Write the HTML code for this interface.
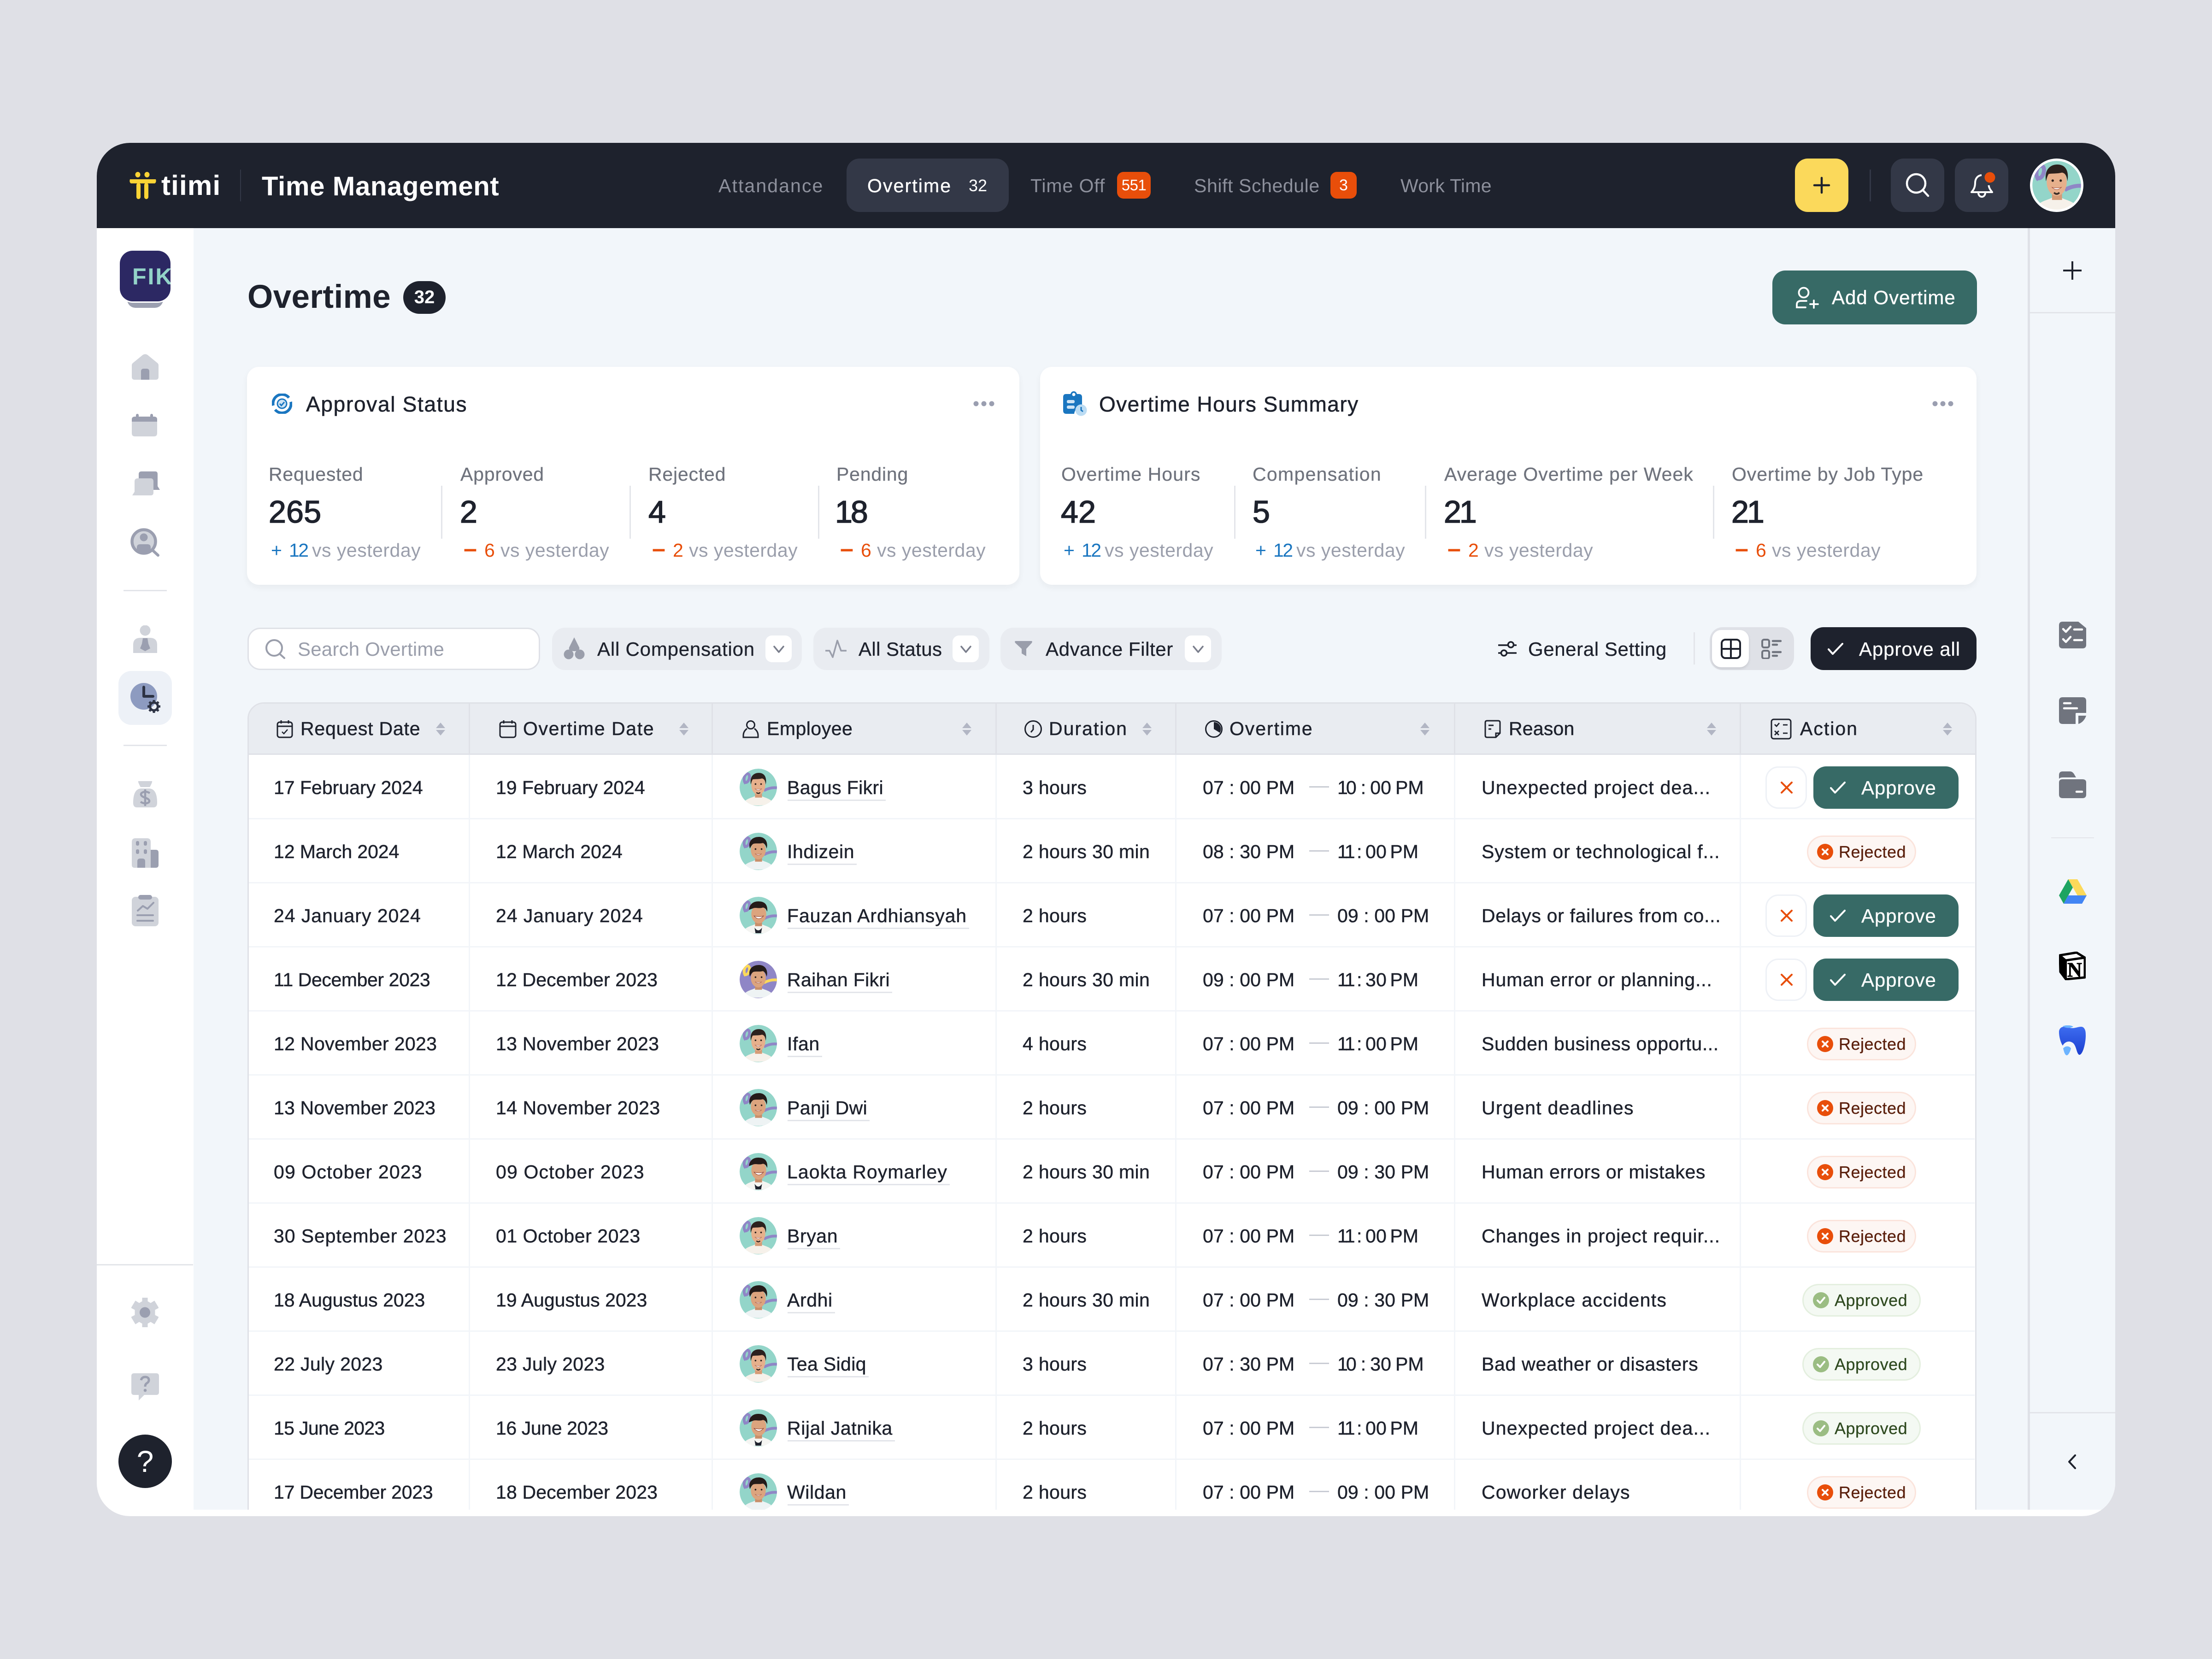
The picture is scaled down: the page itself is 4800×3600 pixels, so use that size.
<!DOCTYPE html>
<html lang="en"><head><meta charset="utf-8"><title>Time Management</title>
<style>
html,body{margin:0;padding:0;width:4800px;height:3600px;overflow:hidden;background:#dfe0e6}
*{box-sizing:border-box}
body{font-family:"Liberation Sans",sans-serif;color:#1e222d}
i{font-style:normal}
.a,.t,svg{position:absolute}
.t{white-space:nowrap;line-height:60px}
#f{position:absolute;left:0;top:0;width:4800px;height:3600px;background:#fff;clip-path:inset(310px 210px 310px 210px round 72px)}
.nav{font-size:41px;color:#8d909c;letter-spacing:.6px;top:373px}
.bd{background:#e84e0a;color:#fff;border-radius:14px;height:58px;top:373px;text-align:center;font-size:34px;line-height:58px}
.card{background:#fff;border-radius:26px;top:796px;height:473px;box-shadow:0 6px 14px rgba(30,34,45,.05)}
.ct{font-size:46px;top:847px;letter-spacing:1.7px;-webkit-text-stroke:.6px #1e222d}
.lb{font-size:41px;color:#6f737d;top:999px;letter-spacing:.8px;-webkit-text-stroke:.3px #6f737d}
.nm{font-size:68px;top:1081px;-webkit-text-stroke:1.6px #1e222d;line-height:60px;letter-spacing:.3px}
.dl{font-size:41px;color:#9a9eab;top:1164px;letter-spacing:.5px}
.dl b{font-weight:400;display:inline-block}
.dl b.mn{font-size:52px;font-weight:700;width:45px;line-height:40px}
.dl b.tw{letter-spacing:-2.5px}
.bl{color:#1a76c0}.or{color:#e84e0a}
.dv{background:#e3e5ea;width:3px;top:1054px;height:115px}
.tb{background:#e9ecf1;border-radius:28px;top:1362px;height:92px}
.fl{font-size:42px;top:1379px;letter-spacing:.4px;-webkit-text-stroke:.35px #1e222d}
.cv{background:#fff;border-radius:14px;top:1379px;width:57px;height:58px}
.th{font-size:41px;top:1551px;letter-spacing:.5px;-webkit-text-stroke:.5px #1e222d}
.v{top:1527px;height:1749px;width:3px;background:#f2f5f9}
.vh{top:1527px;height:108px;width:3px;background:#dfe1e7}
.r{position:absolute;left:0;width:4800px;height:139px}
.r::after{content:"";position:absolute;left:540px;width:3745px;top:137px;height:3px;background:#f2f5f9}
.r>i,.r>u{position:absolute;top:0;line-height:142px;font-size:41px;white-space:nowrap;letter-spacing:.35px;-webkit-text-stroke:.5px #1e222d;text-decoration:none}
.c1{left:594px}.c2{left:1076px}.d{left:2219px}.s{left:2610px;letter-spacing:.1px!important}.e{left:2902px;letter-spacing:.1px!important}.e s{text-decoration:none;letter-spacing:-4px}.e.t1{word-spacing:-2.5px}.e.t2{word-spacing:-4px}.w{left:3215px}
.r>u{left:1706px;padding-left:2px;letter-spacing:.6px}
.r>u::after{content:"";position:absolute;left:3px;right:-5px;top:97px;height:3px;background:#e3e5ea}
.r>b{position:absolute;left:2841px;top:68px;width:43px;height:3px;background:#c9ccd4}
.r>svg.av{left:1605px;top:30px;width:81px;height:81px;border-radius:50%}
.x{position:absolute;left:3831px;top:25px;width:90px;height:92px;border:3px solid #eef1f6;border-radius:28px;background:#fff}
.ab{position:absolute;left:3935px;top:25px;width:315px;height:92px;background:#376a66;border-radius:28px;color:#fff;font-size:42px;line-height:94px;padding-left:104px;letter-spacing:.9px;-webkit-text-stroke:.3px #fff}
.rj,.ap{position:absolute;top:36px;height:71px;border-radius:36px;font-size:36px;line-height:66px;letter-spacing:.5px;white-space:nowrap}
.rj{left:3921px;width:237px;background:#fdf6f3;border:3px solid #fbe4dc;color:#5a1f0c;padding-left:66px;-webkit-text-stroke:.3px #5a1f0c}
.ap{left:3911px;width:257px;background:#f4f9f3;border:3px solid #e4efdf;color:#2f4a20;padding-left:67px;-webkit-text-stroke:.3px #2f4a20}
.rj svg,.ap svg{left:19px;top:15px;width:35px;height:35px}
.ap svg{left:20px}
</style></head><body>
<svg width="0" height="0" style="position:absolute;left:0;top:0">
<defs>
<symbol id="bgt" viewBox="0 0 80 80"><circle cx="40" cy="40" r="40" fill="#93d5c9"/><path d="M13 32C6 24 11 9 18 11C25 14 19 33 11 29" fill="none" stroke="#8f86c6" stroke-width="6"/><path d="M52 47C61 42 71 40 80 41" fill="none" stroke="#8f86c6" stroke-width="6"/></symbol>
<symbol id="bgp" viewBox="0 0 80 80"><circle cx="40" cy="40" r="40" fill="#8f86c6"/><path d="M13 32C6 24 11 9 18 11C25 14 19 33 11 29" fill="none" stroke="#fbd95b" stroke-width="6"/><path d="M52 47C61 42 71 40 80 41" fill="none" stroke="#fbd95b" stroke-width="6"/></symbol>
<symbol id="p1" viewBox="0 0 80 80"><path d="M10 70C20 62 28 62 34 58L46 58C52 62 60 62 70 70C60 82 20 82 10 70Z" fill="#f6f1ea"/><rect x="33" y="48" width="15" height="14" fill="#d59b76"/><ellipse cx="40" cy="35" rx="15" ry="21" fill="#e6b08c"/><path d="M24 34C21 17 30 9 41 9C52 9 59 17 56 34C55 26 53 22 48 21C40 23 33 22 28 23C26 26 25 30 24 34Z" fill="#2b211e"/><circle cx="34" cy="33" r="1.8" fill="#2b211e"/><circle cx="46" cy="33" r="1.8" fill="#2b211e"/><path d="M33 43Q40 50 47 43Q40 45 33 43Z" fill="#fff" stroke="#a5523e" stroke-width=".7"/><path d="M36 51Q40 55 44 51" stroke="#3a2c26" stroke-width="2.5" fill="none"/></symbol>
<symbol id="p2" viewBox="0 0 80 80"><path d="M10 70C20 62 28 62 34 58L46 58C52 62 60 62 70 70C60 82 20 82 10 70Z" fill="#eef3f4"/><rect x="33" y="48" width="15" height="14" fill="#c98f6a"/><ellipse cx="40" cy="37" rx="16" ry="20" fill="#dca47e"/><path d="M22 34C17 17 29 9 40 9C52 8 62 17 58 34C56 27 54 24 50 22C42 24 34 22 29 24C26 26 24 30 22 34Z" fill="#241b19"/><circle cx="34" cy="35" r="1.8" fill="#2b211e"/><circle cx="47" cy="35" r="1.8" fill="#2b211e"/><path d="M33 45Q40 51 47 45Q40 47 33 45Z" fill="#fff" stroke="#a5523e" stroke-width=".7"/></symbol>
<symbol id="p3" viewBox="0 0 80 80"><path d="M10 70C20 62 28 62 34 58L46 58C52 62 60 62 70 70C60 82 20 82 10 70Z" fill="#f5f5f2"/><path d="M32 66Q40 78 48 66L46 78H34Z" fill="#1e222d"/><rect x="33" y="48" width="15" height="15" fill="#c98f6a"/><ellipse cx="41" cy="37" rx="16" ry="20" fill="#dca47e"/><path d="M20 28C21 14 32 9 42 10C54 10 61 18 59 32C57 27 55 24 50 23C42 26 34 22 28 25C25 26 23 27 20 28Z" fill="#241b19"/><path d="M31 41Q41 53 51 41Q41 44 31 41Z" fill="#fff" stroke="#8a3b2c" stroke-width="1"/></symbol>
<symbol id="sr" viewBox="0 0 20 28"><path d="M10 0L20 12H0Z" fill="#b2b6c4"/><path d="M0 16H20L10 28Z" fill="#b2b6c4"/></symbol>
<symbol id="rx" viewBox="0 0 35 35"><circle cx="17.5" cy="17.5" r="17.5" fill="#e84e0a"/><path d="M12 12L23 23M23 12L12 23" stroke="#fff" stroke-width="4" stroke-linecap="round"/></symbol>
<symbol id="ok" viewBox="0 0 35 35"><circle cx="17.5" cy="17.5" r="17.5" fill="#9bbd83"/><path d="M10 18L15.5 23.5L25 12" stroke="#fff" stroke-width="4" fill="none" stroke-linecap="round" stroke-linejoin="round"/></symbol>
<symbol id="ck" viewBox="0 0 34 26"><path d="M2 14L11 24L32 2" stroke="#fff" stroke-width="4" fill="none" stroke-linecap="round" stroke-linejoin="round"/></symbol>
<symbol id="xx" viewBox="0 0 26 26"><path d="M2 2L24 24M24 2L2 24" stroke="#e84e0a" stroke-width="4" stroke-linecap="round"/></symbol>
<symbol id="dt" viewBox="0 0 46 12"><circle cx="6" cy="6" r="5.5" fill="#9a9eb0"/><circle cx="23" cy="6" r="5.5" fill="#9a9eb0"/><circle cx="40" cy="6" r="5.5" fill="#9a9eb0"/></symbol>
<symbol id="chv" viewBox="0 0 24 16"><path d="M2 2L12 14L22 2" stroke="#7a7e8c" stroke-width="3.5" fill="none" stroke-linecap="round" stroke-linejoin="round"/></symbol>
</defs></svg>

<div id="f">
<!-- main backgrounds -->
<div class="a" style="left:420px;top:495px;width:3980px;height:2781px;background:#f2f6fa"></div>
<div class="a" style="left:4400px;top:495px;width:5px;height:2781px;background:#dfe1e7"></div>
<div class="a" style="left:4405px;top:495px;width:185px;height:2781px;background:#f2f6fa"></div>

<!-- header -->
<div class="a" style="left:210px;top:310px;width:4380px;height:185px;background:#1e222d"></div>
<svg style="left:280px;top:373px" width="60" height="59" viewBox="0 0 60 59"><ellipse cx="19" cy="6" rx="5.5" ry="6" fill="#fbd335"/><ellipse cx="39" cy="6" rx="5.5" ry="6" fill="#fbd335"/><path d="M2 16H58Q60 22 56 25H4Q0 22 2 16Z" fill="#fbd335"/><rect x="16" y="24" width="9" height="35" rx="4.5" fill="#fbd335"/><rect x="33" y="24" width="9" height="35" rx="4.5" fill="#fbd335"/></svg>
<div class="t" style="left:350px;top:373px;font-size:60px;font-weight:700;color:#fff;letter-spacing:1.200px">tiimi</div>
<div class="a" style="left:521px;top:368px;width:2px;height:69px;background:#333847"></div>
<div class="t" style="left:568px;top:375px;font-size:58px;font-weight:700;color:#fff;letter-spacing:.7px">Time Management</div>

<div class="t nav" style="left:1559px;letter-spacing:2.1px">Attandance</div>
<div class="a" style="left:1837px;top:344px;width:352px;height:116px;border-radius:28px;background:#333847"></div>
<div class="t nav" style="left:1882px;color:#fff;-webkit-text-stroke:.4px #fff;letter-spacing:2.1px">Overtime</div>
<div class="t nav" style="left:2102px;color:#fff;font-size:36px;letter-spacing:0">32</div>
<div class="t nav" style="left:2236px;letter-spacing:.9px">Time Off</div>
<div class="a bd" style="left:2424px;width:73px;font-size:33px;letter-spacing:-.5px">551</div>
<div class="t nav" style="left:2591px">Shift Schedule</div>
<div class="a bd" style="left:2887px;width:57px">3</div>
<div class="t nav" style="left:3039px;letter-spacing:.3px">Work Time</div>

<div class="a" style="left:3895px;top:344px;width:116px;height:116px;border-radius:28px;background:#fbd95b"></div>
<svg style="left:3933px;top:382px" width="40" height="40" viewBox="0 0 40 40"><path d="M20 4V36M4 20H36" stroke="#1e222d" stroke-width="4.5" stroke-linecap="round"/></svg>
<div class="a" style="left:4057px;top:368px;width:3px;height:69px;background:#333847"></div>
<div class="a" style="left:4103px;top:344px;width:116px;height:116px;border-radius:28px;background:#333847"></div>
<svg style="left:4130px;top:370px" width="60" height="60" viewBox="0 0 60 60"><circle cx="28" cy="28" r="20" fill="none" stroke="#fff" stroke-width="4.5"/><path d="M43 43L54 55" stroke="#fff" stroke-width="4.5" stroke-linecap="round"/></svg>
<div class="a" style="left:4242px;top:344px;width:116px;height:116px;border-radius:28px;background:#333847"></div>
<svg style="left:4270px;top:370px" width="64" height="60" viewBox="0 0 64 60"><path d="M30 10C21 11 16 18 16 27C16 36 13 42 8 47H53C49 42 46 38 45.5 32" fill="none" stroke="#fff" stroke-width="4" stroke-linejoin="round"/><path d="M23 48C23 60 38 60 38 48" fill="none" stroke="#fff" stroke-width="4"/><circle cx="48" cy="15" r="11.5" fill="#e84e0a"/></svg>
<svg style="left:4405px;top:344px;border-radius:50%" width="116" height="116" viewBox="0 0 80 80"><use href="#bgt" width="80" height="80"/><use href="#p1" width="80" height="80"/><circle cx="40" cy="40" r="38.2" fill="none" stroke="#fff" stroke-width="3.6"/></svg>

<!-- sidebar -->
<div class="a" style="left:276px;top:650px;width:78px;height:18px;background:#9b9fb0;border-radius:0 0 20px 20px"></div>
<div class="a" style="left:260px;top:544px;width:110px;height:110px;background:#2c2863;border-radius:28px;overflow:hidden;box-shadow:0 3px 0 #fff"><div class="t" style="left:27px;top:26px;font-size:50px;font-weight:700;color:#93d3c8;letter-spacing:3px">FIK</div></div>
<svg style="left:286px;top:768px" width="58" height="56" viewBox="0 0 58 56"><path d="M24 2Q29 -1 34 2L56 20Q58 22 58 25V50Q58 56 52 56H6Q0 56 0 50V25Q0 22 2 20Z" fill="#d0d3da"/><path d="M20 56V38Q20 32 26 32H32Q38 32 38 38V56Z" fill="#9b9fb0"/></svg>
<svg style="left:286px;top:898px" width="56" height="50" viewBox="0 0 56 50"><path d="M0 17H55V42Q55 49 48 49H7Q0 49 0 42Z" fill="#d0d3da"/><path d="M0 17V12Q0 6 7 6H48Q55 6 55 12V17Z" fill="#9b9fb0"/><rect x="9" y="0" width="6" height="10" rx="3" fill="#9b9fb0"/><rect x="40" y="0" width="6" height="10" rx="3" fill="#9b9fb0"/></svg>
<svg style="left:287px;top:1023px" width="60" height="56" viewBox="0 0 60 56"><path d="M14 6Q14 0 20 0H50Q55 0 55 6V32L60 40H14Z" fill="#9b9fb0"/><path d="M5 22Q5 15 12 15H40Q46 15 46 22V46Q46 52 40 52H0L5 44Z" fill="#d0d3da"/></svg>
<svg style="left:283px;top:1146px" width="64" height="62" viewBox="0 0 64 62"><circle cx="29" cy="29" r="25.5" fill="#d0d3da" stroke="#9b9fb0" stroke-width="6.5"/><circle cx="29" cy="20" r="8.5" fill="#9b9fb0"/><path d="M14 47V42Q14 35 21 35H37Q44 35 44 42V47Q29 58 14 47Z" fill="#9b9fb0"/><path d="M47 47L60 59" stroke="#9b9fb0" stroke-width="6" stroke-linecap="round"/></svg>
<div class="a" style="left:268px;top:1280px;width:94px;height:3px;background:#e3e5ea"></div>
<svg style="left:289px;top:1357px" width="52" height="60" viewBox="0 0 52 60"><circle cx="26" cy="11" r="11.5" fill="#d0d3da"/><path d="M0 60V42Q0 27 16 27H36Q52 27 52 42V60Z" fill="#d0d3da"/><path d="M21 28H31L33 40L37 50L26 56L15 50L19 40Z" fill="#9b9fb0"/></svg>
<div class="a" style="left:257px;top:1456px;width:116px;height:117px;border-radius:28px;background:#edf1f7"></div>
<svg style="left:283px;top:1482px" width="66" height="66" viewBox="0 0 66 66"><circle cx="29" cy="29" r="29" fill="#8d9bc0"/><path d="M29 9V29H49" fill="none" stroke="#2d3344" stroke-width="6" stroke-linecap="round" stroke-linejoin="round"/><circle cx="51" cy="51" r="8.5" fill="none" stroke="#2d3344" stroke-width="5"/><path d="M51 37V42M51 60V65M37 51H42M60 51H65M41 41L44 44M58 58L61 61M61 41L58 44M44 58L41 61" stroke="#2d3344" stroke-width="5"/></svg>
<div class="a" style="left:268px;top:1616px;width:94px;height:3px;background:#e3e5ea"></div>
<svg style="left:289px;top:1694px" width="52" height="59" viewBox="0 0 52 59"><path d="M11 1H41Q42 3 36 14H16Q10 3 11 1Z" fill="#d0d3da"/><path d="M0 48Q0 18 17 17H35Q52 18 52 48Q52 58 44 58H8Q0 58 0 48Z" fill="#d0d3da"/><path d="M36 27Q26 21 18 27Q14 33 26 37Q38 41 34 47Q26 52 16 46M26 19V55" fill="none" stroke="#9b9fb0" stroke-width="4.5"/></svg>
<svg style="left:286px;top:1819px" width="58" height="64" viewBox="0 0 58 64"><path d="M0 8Q0 0 8 0H33Q41 0 41 8V64H6Q0 64 0 58Z" fill="#d0d3da"/><path d="M41 25H52Q58 25 58 31V58Q58 64 52 64H41Z" fill="#9b9fb0"/><rect x="9" y="6" width="7" height="10" rx="3" fill="#9b9fb0"/><rect x="26" y="6" width="7" height="10" rx="3" fill="#9b9fb0"/><rect x="9" y="24" width="7" height="10" rx="3" fill="#9b9fb0"/><rect x="26" y="24" width="7" height="10" rx="3" fill="#9b9fb0"/><path d="M12 64V50Q12 44 18 44H23Q29 44 29 50V64Z" fill="#9b9fb0"/></svg>
<svg style="left:286px;top:1942px" width="58" height="68" viewBox="0 0 58 68"><rect x="0" y="4" width="58" height="64" rx="8" fill="#d0d3da"/><rect x="14" y="0" width="30" height="10" rx="5" fill="#9b9fb0"/><path d="M13 34L24 24L34 30L47 17" fill="none" stroke="#9b9fb0" stroke-width="4" stroke-linecap="round" stroke-linejoin="round"/><path d="M12 44H46M12 56H46" stroke="#9b9fb0" stroke-width="4" stroke-linecap="round"/></svg>
<div class="a" style="left:210px;top:2743px;width:209px;height:3px;background:#e3e5ea"></div>
<svg style="left:285px;top:2816px" width="59" height="64" viewBox="0 0 59 64"><path d="M24 0H35V8L42 12L50 7L59 22L51 26V38L59 42L50 57L42 52L35 56V64H24V56L17 52L9 57L0 42L8 38V26L0 22L9 7L17 12L24 8Z" fill="#d0d3da" stroke="#d0d3da" stroke-width="1" stroke-linejoin="round"/><circle cx="29.500" cy="32" r="11.500" fill="#9b9fb0"/></svg>
<svg style="left:285px;top:2980px" width="60" height="60" viewBox="0 0 60 60"><path d="M6 0H54Q60 0 60 6V41Q60 47 54 47H28L16 59V47H6Q0 47 0 41V6Q0 0 6 0Z" fill="#d0d3da"/><path d="M21 15Q23 8 30 8Q38 8 38 15Q38 19 33 22Q30 24 30 29" fill="none" stroke="#9b9fb0" stroke-width="5"/><circle cx="30" cy="37" r="3.300" fill="#9b9fb0"/></svg>
<div class="a" style="left:257px;top:3113px;width:116px;height:116px;border-radius:50%;background:#1e222d;color:#fff;text-align:center;font-size:66px;line-height:116px">?</div>

<!-- right panel -->
<svg style="left:4477px;top:567px" width="40" height="40" viewBox="0 0 40 40"><path d="M20 1V39M1 20H39" stroke="#1e222d" stroke-width="4" stroke-linecap="round"/></svg>
<div class="a" style="left:4405px;top:677px;width:185px;height:3px;background:#e3e5ea"></div>
<svg style="left:4468px;top:1349px" width="59" height="58" viewBox="0 0 59 58"><path d="M8 0H42L59 14V50Q59 58 51 58H8Q0 58 0 50V8Q0 0 8 0Z" fill="#70747e"/><path d="M9 16L15 22L25 11M9 38L15 44L25 33M33 17H50M33 40H50" fill="none" stroke="#fff" stroke-width="4.500" stroke-linecap="round" stroke-linejoin="round"/></svg>
<svg style="left:4468px;top:1513px" width="59" height="58" viewBox="0 0 59 58"><path d="M8 0H51Q59 0 59 8V34H38Q36 34 36 36V58H8Q0 58 0 50V8Q0 0 8 0Z" fill="#70747e"/><path d="M42 40H59Q54 54 42 58Z" fill="#70747e"/><path d="M11 13H25M11 24H39" stroke="#fff" stroke-width="4.500" stroke-linecap="round"/></svg>
<svg style="left:4468px;top:1674px" width="59" height="58" viewBox="0 0 59 58"><path d="M0 16V8Q0 0 8 0H24Q30 0 34 8L37 13H8Q2 13 0 16Z" fill="#70747e"/><path d="M0 24Q0 17 8 17H51Q59 17 59 24V50Q59 58 51 58H8Q0 58 0 50Z" fill="#70747e"/><path d="M38 44H50" stroke="#fff" stroke-width="4.500" stroke-linecap="round"/></svg>
<div class="a" style="left:4451px;top:1817px;width:93px;height:2px;background:#e3e5ea"></div>
<svg style="left:4468px;top:1908px" width="60" height="53" viewBox="0 0 60 53"><path d="M20 0H40L60 35H40Z" fill="#fcd95a"/><path d="M20 0L0 35L10 53L30 18Z" fill="#1da462"/><path d="M10 53H50L60 35H20Z" fill="#4285f4"/></svg>
<svg style="left:4468px;top:2065px" width="58" height="62" viewBox="0 0 58 62"><path d="M2 8L38 2L56 13V56L15 60L3 44Z" fill="#fff" stroke="#000" stroke-width="5" stroke-linejoin="round"/><path d="M2 8L15 19V60L3 44Z" fill="#000" stroke="#000" stroke-width="4" stroke-linejoin="round"/><path d="M15 19L56 13" stroke="#000" stroke-width="5"/><text x="18" y="54" font-family="Liberation Serif" font-weight="700" font-size="44" fill="#000" stroke="#000" stroke-width="1">N</text></svg>
<svg style="left:4468px;top:2225px" width="58" height="66" viewBox="0 0 58 66"><defs><linearGradient id="tg" x1="0" y1="0" x2="0" y2="1"><stop offset="0" stop-color="#3d6cf0"/><stop offset="1" stop-color="#1c3fd0"/></linearGradient></defs><path d="M6 4C14 1 20 6 29 6C38 6 46 1 52 4C58 8 58 16 58 22C58 38 52 64 44 64C38 62 38 44 30 38C22 32 12 36 8 44C3 36 0 24 0 14C0 10 2 6 6 4Z" fill="url(#tg)"/><path d="M8 2C14 -1 26 -1 31 3C24 7 14 6 8 2Z" fill="#6cb4ff"/><path d="M9 50C14 44 22 44 26 50C24 58 20 65 17 65C13 65 11 58 9 50Z" fill="#6cb4ff"/></svg>
<div class="a" style="left:4405px;top:3064px;width:185px;height:3px;background:#e3e5ea"></div>
<svg style="left:4486px;top:3156px" width="20" height="32" viewBox="0 0 20 32"><path d="M17 2L4 16L17 30" fill="none" stroke="#1e222d" stroke-width="4" stroke-linecap="round" stroke-linejoin="round"/></svg>

<!-- title -->
<div class="t" style="left:537px;top:615px;font-size:71px;font-weight:700;line-height:60px;letter-spacing:.4px">Overtime</div>
<div class="a" style="left:875px;top:610px;width:92px;height:71px;border-radius:36px;background:#1e222d;color:#fff;text-align:center;font-size:40px;font-weight:700;line-height:71px">32</div>
<div class="a" style="left:3846px;top:587px;width:444px;height:117px;border-radius:28px;background:#376a66"></div>
<svg style="left:3896px;top:622px" width="52" height="48" viewBox="0 0 52 48"><circle cx="18" cy="13" r="10.500" fill="none" stroke="#fff" stroke-width="3.800"/><path d="M24 31H12Q3 31 3 39V45H22" fill="none" stroke="#fff" stroke-width="3.800" stroke-linecap="round"/><path d="M40 30V46M32 38H49" stroke="#fff" stroke-width="3.800" stroke-linecap="round"/></svg>
<div class="t" style="left:3975px;top:616px;font-size:42px;color:#fff;letter-spacing:1px;-webkit-text-stroke:.4px #fff">Add Overtime</div>

<!-- card 1 -->
<div class="a card" style="left:536px;width:1676px"></div>
<svg style="left:590px;top:854px" width="44" height="44" viewBox="0 0 44 44"><path d="M3 26A19.500 19.500 0 0 1 37 9" fill="none" stroke="#1a76c0" stroke-width="6"/><path d="M41 18A19.500 19.500 0 0 1 7 35" fill="none" stroke="#1a76c0" stroke-width="6"/><circle cx="22" cy="22" r="10" fill="#cfe4f5" stroke="#1a76c0" stroke-width="3"/><path d="M17 22L20.500 26L27 18.500" fill="none" stroke="#1a76c0" stroke-width="3"/></svg>
<div class="t ct" style="left:664px">Approval Status</div>
<svg style="left:2112px;top:870px" width="46" height="12"><use href="#dt" width="46" height="12"/></svg>
<div class="t lb" style="left:583px">Requested</div>
<div class="t lb" style="left:999px">Approved</div>
<div class="t lb" style="left:1407px">Rejected</div>
<div class="t lb" style="left:1815px">Pending</div>
<div class="t nm" style="left:583px">265</div>
<div class="t nm" style="left:998px">2</div>
<div class="t nm" style="left:1407px">4</div>
<div class="t nm" style="left:1812px;letter-spacing:-4px">18</div>
<div class="a dv" style="left:957px"></div><div class="a dv" style="left:1366px"></div><div class="a dv" style="left:1775px"></div>
<div class="t dl" style="left:588px"><b class="bl" style="width:39px">+</b><b class="bl tw" style="width:50px">12</b>vs yesterday</div>
<div class="t dl" style="left:1006px"><b class="or mn">–</b><b class="or" style="width:35px">6</b>vs yesterday</div>
<div class="t dl" style="left:1415px"><b class="or mn">–</b><b class="or" style="width:35px">2</b>vs yesterday</div>
<div class="t dl" style="left:1823px"><b class="or mn">–</b><b class="or" style="width:35px">6</b>vs yesterday</div>

<!-- card 2 -->
<div class="a card" style="left:2257px;width:2032px"></div>
<svg style="left:2307px;top:849px" width="52" height="54" viewBox="0 0 52 54"><path d="M6 6H16Q18 0 23 0Q28 0 30 6H34Q41 6 41 13V34A16 16 0 0 0 24 49H7Q0 49 0 42V13Q0 6 6 6Z" fill="#1a76c0"/><circle cx="23" cy="7" r="3.500" fill="#fff"/><rect x="8" y="19" width="17" height="7" rx="3" fill="#cfe4f5"/><rect x="8" y="31" width="17" height="7" rx="3" fill="#cfe4f5"/><circle cx="39" cy="41" r="12.500" fill="#bcdcf3"/><path d="M39 34V41L43 44" fill="none" stroke="#1a76c0" stroke-width="3"/></svg>
<div class="t ct" style="left:2385px;letter-spacing:1.45px">Overtime Hours Summary</div>
<svg style="left:4193px;top:870px" width="46" height="12"><use href="#dt" width="46" height="12"/></svg>
<div class="t lb" style="left:2303px;letter-spacing:1.1px">Overtime Hours</div>
<div class="t lb" style="left:2718px;letter-spacing:1.3px">Compensation</div>
<div class="t lb" style="left:3134px;letter-spacing:1px">Average Overtime per Week</div>
<div class="t lb" style="left:3758px;letter-spacing:.9px">Overtime by Job Type</div>
<div class="t nm" style="left:2302px">42</div>
<div class="t nm" style="left:2718px">5</div>
<div class="t nm" style="left:3133px;letter-spacing:-4px">21</div>
<div class="t nm" style="left:3757px;letter-spacing:-4px">21</div>
<div class="a dv" style="left:2678px"></div><div class="a dv" style="left:3092px"></div><div class="a dv" style="left:3717px"></div>
<div class="t dl" style="left:2308px"><b class="bl" style="width:39px">+</b><b class="bl tw" style="width:50px">12</b>vs yesterday</div>
<div class="t dl" style="left:2724px"><b class="bl" style="width:39px">+</b><b class="bl tw" style="width:50px">12</b>vs yesterday</div>
<div class="t dl" style="left:3141px"><b class="or mn">–</b><b class="or" style="width:35px">2</b>vs yesterday</div>
<div class="t dl" style="left:3765px"><b class="or mn">–</b><b class="or" style="width:35px">6</b>vs yesterday</div>

<!-- toolbar -->
<div class="a" style="left:537px;top:1362px;width:635px;height:92px;background:#fff;border:3px solid #dfe1e7;border-radius:28px"></div>
<svg style="left:574px;top:1386px" width="48" height="44" viewBox="0 0 48 44"><circle cx="21" cy="20" r="17" fill="none" stroke="#9a9eab" stroke-width="4"/><path d="M33 33L43 42" stroke="#9a9eab" stroke-width="4" stroke-linecap="round"/></svg>
<div class="t fl" style="left:646px;color:#9a9eab;-webkit-text-stroke:0;letter-spacing:.2px">Search Overtime</div>
<div class="a tb" style="left:1198px;width:542px"></div>
<svg style="left:1223px;top:1383px" width="46" height="48" viewBox="0 0 46 48"><path d="M23 0L34 22Q36 30 23 30Q10 30 12 22Z" fill="#9a9eab"/><circle cx="11" cy="37" r="10.500" fill="#9a9eab"/><circle cx="35" cy="37" r="10.500" fill="#9a9eab"/></svg>
<div class="t fl" style="left:1296px;letter-spacing:.8px">All Compensation</div>
<div class="a cv" style="left:1661px"></div>
<svg style="left:1678px;top:1401px" width="24" height="16"><use href="#chv" width="24" height="16"/></svg>
<div class="a tb" style="left:1765px;width:382px"></div>
<svg style="left:1791px;top:1388px" width="46" height="40" viewBox="0 0 46 40"><path d="M1 24H9L16 38L26 2L34 24H45" fill="none" stroke="#9a9eab" stroke-width="3.500" stroke-linejoin="round" stroke-linecap="round"/></svg>
<div class="t fl" style="left:1863px">All Status</div>
<div class="a cv" style="left:2067px"></div>
<svg style="left:2084px;top:1401px" width="24" height="16"><use href="#chv" width="24" height="16"/></svg>
<div class="a tb" style="left:2171px;width:480px"></div>
<svg style="left:2201px;top:1388px" width="40" height="40" viewBox="0 0 40 40"><path d="M3 3H37Q40 3 38 7L26 20V36L16 30V20L2 7Q0 3 3 3Z" fill="#9a9eab"/></svg>
<div class="t fl" style="left:2269px;letter-spacing:.6px">Advance Filter</div>
<div class="a cv" style="left:2571px"></div>
<svg style="left:2588px;top:1401px" width="24" height="16"><use href="#chv" width="24" height="16"/></svg>
<svg style="left:3251px;top:1390px" width="40" height="36" viewBox="0 0 40 36"><path d="M1 10H21M34 10H39M1 27H6M19 27H39" stroke="#1e222d" stroke-width="3.500" stroke-linecap="round"/><circle cx="27.500" cy="9" r="6" fill="none" stroke="#1e222d" stroke-width="3.500"/><circle cx="12.500" cy="27" r="6" fill="none" stroke="#1e222d" stroke-width="3.500"/></svg>
<div class="t fl" style="left:3316px;letter-spacing:.6px">General Setting</div>
<div class="a" style="left:3675px;top:1372px;width:3px;height:70px;background:#e3e5ea"></div>
<div class="a" style="left:3710px;top:1361px;width:183px;height:93px;border-radius:28px;background:#dfe1e7"></div>
<div class="a" style="left:3715px;top:1367px;width:80px;height:81px;border-radius:20px;background:#fff;box-shadow:0 3px 6px rgba(30,34,45,.12)"></div>
<svg style="left:3734px;top:1386px" width="44" height="44" viewBox="0 0 44 44"><rect x="2" y="2" width="40" height="40" rx="8" fill="none" stroke="#1e222d" stroke-width="4"/><path d="M22 2V42M2 22H42" stroke="#1e222d" stroke-width="4"/></svg>
<svg style="left:3822px;top:1386px" width="44" height="44" viewBox="0 0 44 44"><rect x="2" y="2" width="15" height="17" rx="4" fill="none" stroke="#70747e" stroke-width="4"/><rect x="2" y="26" width="15" height="17" rx="4" fill="none" stroke="#70747e" stroke-width="4"/><path d="M25 5H42M25 13H34M25 29H42M25 37H34" stroke="#70747e" stroke-width="4.500" stroke-linecap="round"/></svg>
<div class="a" style="left:3929px;top:1361px;width:360px;height:93px;border-radius:28px;background:#1e222d"></div>
<svg style="left:3966px;top:1395px" width="34" height="26"><use href="#ck" width="34" height="26"/></svg>
<div class="t fl" style="left:4034px;color:#fff;-webkit-text-stroke:.3px #fff;letter-spacing:.9px">Approve all</div>

<!-- table -->
<div class="a" style="left:0;top:0;width:4800px;height:3276px;overflow:hidden">
<div class="a" style="left:537px;top:1524px;width:3752px;height:1800px;background:#fff;border:3px solid #dfe1e7;border-radius:36px 36px 0 0"></div>
<div class="a" style="left:540px;top:1527px;width:3746px;height:108px;background:#e9ecf1;border-radius:33px 33px 0 0"></div>
<div class="a" style="left:537px;top:1635px;width:3752px;height:3px;background:#dfe1e7"></div>
<div class="a v" style="left:1017px;top:1638px;height:1640px"></div><div class="a v" style="left:1544px;top:1638px;height:1640px"></div><div class="a v" style="left:2160px;top:1638px;height:1640px"></div><div class="a v" style="left:2550px;top:1638px;height:1640px"></div><div class="a v" style="left:3155px;top:1638px;height:1640px"></div><div class="a v" style="left:3775px;top:1638px;height:1640px"></div>
<div class="a vh" style="left:1017px"></div><div class="a vh" style="left:1544px"></div><div class="a vh" style="left:2160px"></div><div class="a vh" style="left:2550px"></div><div class="a vh" style="left:3155px"></div><div class="a vh" style="left:3775px"></div>

<svg style="left:600px;top:1562px" width="36" height="40" viewBox="0 0 36 40"><rect x="2" y="5" width="32" height="33" rx="5" fill="none" stroke="#1e222d" stroke-width="3"/><path d="M2 14H34M10 1V8M26 1V8" stroke="#1e222d" stroke-width="3"/><path d="M12 26L16 30L24 21" fill="none" stroke="#1e222d" stroke-width="2.500"/></svg>
<div class="t th" style="left:652px;letter-spacing:.8px">Request Date</div>
<svg style="left:946px;top:1568px" width="20" height="28"><use href="#sr" width="20" height="28"/></svg>
<svg style="left:1083px;top:1562px" width="38" height="40" viewBox="0 0 38 40"><rect x="2" y="5" width="34" height="33" rx="5" fill="none" stroke="#1e222d" stroke-width="3"/><path d="M2 14H36M10 1V8M28 1V8" stroke="#1e222d" stroke-width="3"/></svg>
<div class="t th" style="left:1135px;letter-spacing:1.6px">Overtime Date</div>
<svg style="left:1474px;top:1568px" width="20" height="28"><use href="#sr" width="20" height="28"/></svg>
<svg style="left:1611px;top:1562px" width="36" height="40" viewBox="0 0 36 40"><circle cx="18" cy="11" r="8.500" fill="none" stroke="#1e222d" stroke-width="3"/><path d="M10 19Q2 25 2 34V38H34V34Q34 25 26 19" fill="none" stroke="#1e222d" stroke-width="3"/></svg>
<div class="t th" style="left:1664px">Employee</div>
<svg style="left:2088px;top:1568px" width="20" height="28"><use href="#sr" width="20" height="28"/></svg>
<svg style="left:2222px;top:1562px" width="40" height="40" viewBox="0 0 40 40"><circle cx="20" cy="20" r="17.500" fill="none" stroke="#1e222d" stroke-width="3"/><path d="M20 11V21L15 27" fill="none" stroke="#1e222d" stroke-width="3"/></svg>
<div class="t th" style="left:2276px;letter-spacing:2px">Duration</div>
<svg style="left:2479px;top:1568px" width="20" height="28"><use href="#sr" width="20" height="28"/></svg>
<svg style="left:2614px;top:1562px" width="40" height="40" viewBox="0 0 40 40"><circle cx="20" cy="20" r="17.500" fill="none" stroke="#1e222d" stroke-width="3"/><path d="M20 5A15 15 0 0 1 33 28L20 20Z" fill="#1e222d"/></svg>
<div class="t th" style="left:2668px;letter-spacing:1.900px">Overtime</div>
<svg style="left:3082px;top:1568px" width="20" height="28"><use href="#sr" width="20" height="28"/></svg>
<svg style="left:3221px;top:1562px" width="36" height="40" viewBox="0 0 36 40"><path d="M25 38H6Q2 38 2 34V6Q2 2 6 2H30Q34 2 34 6V29Z" fill="none" stroke="#1e222d" stroke-width="3"/><path d="M34 29H25V38M9 12H20M9 20H15" fill="none" stroke="#1e222d" stroke-width="3"/></svg>
<div class="t th" style="left:3274px;letter-spacing:.2px">Reason</div>
<svg style="left:3704px;top:1568px" width="20" height="28"><use href="#sr" width="20" height="28"/></svg>
<svg style="left:3842px;top:1559px" width="46" height="46" viewBox="0 0 46 46"><rect x="2" y="2" width="42" height="42" rx="5" fill="none" stroke="#1e222d" stroke-width="3"/><path d="M9 13L13 17L19 10M27 14H37M9 27L18 36M18 27L9 36M27 32H37" fill="none" stroke="#1e222d" stroke-width="2.800"/></svg>
<div class="t th" style="left:3906px;letter-spacing:2px">Action</div>
<svg style="left:4216px;top:1568px" width="20" height="28"><use href="#sr" width="20" height="28"/></svg>

<div class="r" style="top:1638px"><i class="c1" style="letter-spacing:0">17 February 2024</i><i class="c2" style="letter-spacing:0">19 February 2024</i><svg class="av" viewBox="0 0 80 80"><use href="#bgt" width="80" height="80"/><use href="#p1" width="80" height="80"/></svg><u style="letter-spacing:.35px">Bagus Fikri</u><i class="d">3 hours</i><i class="s">07 : 00 PM</i><b></b><i class="e t1"><s>1</s>0 : 00 PM</i><i class="w" style="letter-spacing:1.2px">Unexpected project dea...</i><div class="x"><svg style="left:30px;top:30px" width="26" height="26"><use href="#xx" width="26" height="26"/></svg></div><div class="ab"><svg style="left:36px;top:33px" width="34" height="26"><use href="#ck" width="34" height="26"/></svg>Approve</div></div>
<div class="r" style="top:1777px"><i class="c1" style="letter-spacing:-.1px">12 March 2024</i><i class="c2" style="letter-spacing:.1px">12 March 2024</i><svg class="av" viewBox="0 0 80 80"><use href="#bgt" width="80" height="80"/><use href="#p2" width="80" height="80"/></svg><u>Ihdizein</u><i class="d">2 hours 30 min</i><i class="s">08 : 30 PM</i><b></b><i class="e t2"><s>11</s> : 00 PM</i><i class="w" style="letter-spacing:.9px">System or technological f...</i><div class="rj"><svg><use href="#rx" width="35" height="35"/></svg>Rejected</div></div>
<div class="r" style="top:1916px"><i class="c1" style="letter-spacing:.95px">24 January 2024</i><i class="c2" style="letter-spacing:.95px">24 January 2024</i><svg class="av" viewBox="0 0 80 80"><use href="#bgt" width="80" height="80"/><use href="#p3" width="80" height="80"/></svg><u style="letter-spacing:.9px">Fauzan Ardhiansyah</u><i class="d">2 hours</i><i class="s">07 : 00 PM</i><b></b><i class="e">09 : 00 PM</i><i class="w" style="letter-spacing:.7px">Delays or failures from co...</i><div class="x"><svg style="left:30px;top:30px" width="26" height="26"><use href="#xx" width="26" height="26"/></svg></div><div class="ab"><svg style="left:36px;top:33px" width="34" height="26"><use href="#ck" width="34" height="26"/></svg>Approve</div></div>
<div class="r" style="top:2055px"><i class="c1" style="letter-spacing:-.4px">11 December 2023</i><i class="c2" style="letter-spacing:.15px">12 December 2023</i><svg class="av" viewBox="0 0 80 80"><use href="#bgp" width="80" height="80"/><use href="#p2" width="80" height="80"/></svg><u style="letter-spacing:.35px">Raihan Fikri</u><i class="d">2 hours 30 min</i><i class="s">09 : 00 PM</i><b></b><i class="e t2"><s>11</s> : 30 PM</i><i class="w" style="letter-spacing:.85px">Human error or planning...</i><div class="x"><svg style="left:30px;top:30px" width="26" height="26"><use href="#xx" width="26" height="26"/></svg></div><div class="ab"><svg style="left:36px;top:33px" width="34" height="26"><use href="#ck" width="34" height="26"/></svg>Approve</div></div>
<div class="r" style="top:2194px"><i class="c1">12 November 2023</i><i class="c2">13 November 2023</i><svg class="av" viewBox="0 0 80 80"><use href="#bgt" width="80" height="80"/><use href="#p1" width="80" height="80"/></svg><u>Ifan</u><i class="d">4 hours</i><i class="s">07 : 00 PM</i><b></b><i class="e t2"><s>11</s> : 00 PM</i><i class="w" style="letter-spacing:.6px">Sudden business opportu...</i><div class="rj"><svg><use href="#rx" width="35" height="35"/></svg>Rejected</div></div>
<div class="r" style="top:2333px"><i class="c1" style="letter-spacing:.15px">13 November 2023</i><i class="c2" style="letter-spacing:.5px">14 November 2023</i><svg class="av" viewBox="0 0 80 80"><use href="#bgt" width="80" height="80"/><use href="#p2" width="80" height="80"/></svg><u style="letter-spacing:.35px">Panji Dwi</u><i class="d">2 hours</i><i class="s">07 : 00 PM</i><b></b><i class="e">09 : 00 PM</i><i class="w" style="letter-spacing:1.3px">Urgent deadlines</i><div class="rj"><svg><use href="#rx" width="35" height="35"/></svg>Rejected</div></div>
<div class="r" style="top:2472px"><i class="c1" style="letter-spacing:1.15px">09 October 2023</i><i class="c2" style="letter-spacing:1.15px">09 October 2023</i><svg class="av" viewBox="0 0 80 80"><use href="#bgt" width="80" height="80"/><use href="#p3" width="80" height="80"/></svg><u style="letter-spacing:1.1px">Laokta Roymarley</u><i class="d">2 hours 30 min</i><i class="s">07 : 00 PM</i><b></b><i class="e">09 : 30 PM</i><i class="w" style="letter-spacing:.6px">Human errors or mistakes</i><div class="rj"><svg><use href="#rx" width="35" height="35"/></svg>Rejected</div></div>
<div class="r" style="top:2611px"><i class="c1" style="letter-spacing:.9px">30 September 2023</i><i class="c2" style="letter-spacing:.55px">01 October 2023</i><svg class="av" viewBox="0 0 80 80"><use href="#bgt" width="80" height="80"/><use href="#p1" width="80" height="80"/></svg><u>Bryan</u><i class="d">2 hours</i><i class="s">07 : 00 PM</i><b></b><i class="e t2"><s>11</s> : 00 PM</i><i class="w" style="letter-spacing:1px">Changes in project requir...</i><div class="rj"><svg><use href="#rx" width="35" height="35"/></svg>Rejected</div></div>
<div class="r" style="top:2750px"><i class="c1" style="letter-spacing:0">18 Augustus 2023</i><i class="c2" style="letter-spacing:0">19 Augustus 2023</i><svg class="av" viewBox="0 0 80 80"><use href="#bgt" width="80" height="80"/><use href="#p2" width="80" height="80"/></svg><u>Ardhi</u><i class="d">2 hours 30 min</i><i class="s">07 : 00 PM</i><b></b><i class="e">09 : 30 PM</i><i class="w" style="letter-spacing:1.3px">Workplace accidents</i><div class="ap"><svg><use href="#ok" width="35" height="35"/></svg>Approved</div></div>
<div class="r" style="top:2889px"><i class="c1">22 July 2023</i><i class="c2">23 July 2023</i><svg class="av" viewBox="0 0 80 80"><use href="#bgt" width="80" height="80"/><use href="#p1" width="80" height="80"/></svg><u style="letter-spacing:.35px">Tea Sidiq</u><i class="d">3 hours</i><i class="s">07 : 30 PM</i><b></b><i class="e t1"><s>1</s>0 : 30 PM</i><i class="w" style="letter-spacing:.7px">Bad weather or disasters</i><div class="ap"><svg><use href="#ok" width="35" height="35"/></svg>Approved</div></div>
<div class="r" style="top:3028px"><i class="c1" style="letter-spacing:-.65px">15 June 2023</i><i class="c2" style="letter-spacing:-.4px">16 June 2023</i><svg class="av" viewBox="0 0 80 80"><use href="#bgt" width="80" height="80"/><use href="#p3" width="80" height="80"/></svg><u>Rijal Jatnika</u><i class="d">2 hours</i><i class="s">07 : 00 PM</i><b></b><i class="e t2"><s>11</s> : 00 PM</i><i class="w" style="letter-spacing:1.2px">Unexpected project dea...</i><div class="ap"><svg><use href="#ok" width="35" height="35"/></svg>Approved</div></div>
<div class="r" style="top:3167px"><i class="c1" style="letter-spacing:-.2px">17 December 2023</i><i class="c2" style="letter-spacing:.15px">18 December 2023</i><svg class="av" viewBox="0 0 80 80"><use href="#bgt" width="80" height="80"/><use href="#p2" width="80" height="80"/></svg><u>Wildan</u><i class="d">2 hours</i><i class="s">07 : 00 PM</i><b></b><i class="e">09 : 00 PM</i><i class="w" style="letter-spacing:1.15px">Coworker delays</i><div class="rj"><svg><use href="#rx" width="35" height="35"/></svg>Rejected</div></div>
</div>
</div>
</body></html>
